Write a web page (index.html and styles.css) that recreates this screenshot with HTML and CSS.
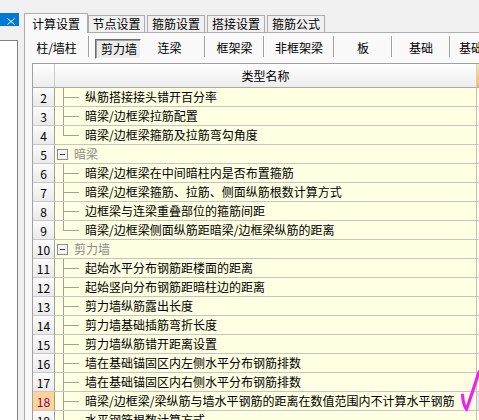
FILE: index.html
```html
<!DOCTYPE html>
<html lang="zh-CN">
<head>
<meta charset="utf-8">
<title>计算设置</title>
<link rel="stylesheet" href="styles.css">
</head>
<body>
<div class="app">
  <aside class="side">
    <div class="side-bar">
      <svg class="close" width="8" height="7" viewBox="0 0 8 7"><path d="M0.5 0.5 L7.5 6.5 M7.5 0.5 L0.5 6.5" stroke="#fff" stroke-width="1" fill="none"/></svg>
    </div>
    <div class="side-box"></div>
  </aside>
  <main class="main">
    <div class="tabs">
      <div class="tab active">计算设置</div>
      <div class="tab first">节点设置</div>
      <div class="tab">箍筋设置</div>
      <div class="tab">搭接设置</div>
      <div class="tab">箍筋公式</div>
    </div>
    <div class="page">
      <div class="subtabs">
        <div class="st w63">柱/墙柱</div>
        <div class="sep"></div>
        <div class="st w56"><div class="pressed">剪力墙</div></div>
        <div class="st w58 shift">连梁</div>
        <div class="sep"></div>
        <div class="st w57">框架梁</div>
        <div class="sep"></div>
        <div class="st w68">非框架梁</div>
        <div class="sep"></div>
        <div class="st w56">板</div>
        <div class="sep"></div>
        <div class="st w56">基础</div>
        <div class="sep"></div>
        <div class="st last">基础</div>
      </div>
      <div class="grid">
        <div class="row hd">
          <div class="c num"></div>
          <div class="c name">类型名称</div>
          <div class="c extra"></div>
        </div>
        <div class="row"><div class="c num">2</div><div class="c txt"><span class="tree"></span>纵筋搭接接头错开百分率</div><div class="c extra"></div></div>
        <div class="row"><div class="c num">3</div><div class="c txt"><span class="tree"></span>暗梁/边框梁拉筋配置</div><div class="c extra"></div></div>
        <div class="row"><div class="c num">4</div><div class="c txt"><span class="tree end"></span>暗梁/边框梁箍筋及拉筋弯勾角度</div><div class="c extra"></div></div>
        <div class="row"><div class="c num">5</div><div class="c txt"><span class="box"></span><span class="grp">暗梁</span></div><div class="c extra"></div></div>
        <div class="row"><div class="c num">6</div><div class="c txt"><span class="tree"></span>暗梁/边框梁在中间暗柱内是否布置箍筋</div><div class="c extra"></div></div>
        <div class="row"><div class="c num">7</div><div class="c txt"><span class="tree"></span>暗梁/边框梁箍筋、拉筋、侧面纵筋根数计算方式</div><div class="c extra"></div></div>
        <div class="row"><div class="c num">8</div><div class="c txt"><span class="tree"></span>边框梁与连梁重叠部位的箍筋间距</div><div class="c extra"></div></div>
        <div class="row"><div class="c num">9</div><div class="c txt"><span class="tree end"></span>暗梁/边框梁侧面纵筋距暗梁/边框梁纵筋的距离</div><div class="c extra"></div></div>
        <div class="row"><div class="c num">10</div><div class="c txt"><span class="box"></span><span class="grp">剪力墙</span></div><div class="c extra"></div></div>
        <div class="row"><div class="c num">11</div><div class="c txt"><span class="tree"></span>起始水平分布钢筋距楼面的距离</div><div class="c extra"></div></div>
        <div class="row"><div class="c num">12</div><div class="c txt"><span class="tree"></span>起始竖向分布钢筋距暗柱边的距离</div><div class="c extra"></div></div>
        <div class="row"><div class="c num">13</div><div class="c txt"><span class="tree"></span>剪力墙纵筋露出长度</div><div class="c extra"></div></div>
        <div class="row"><div class="c num">14</div><div class="c txt"><span class="tree"></span>剪力墙基础插筋弯折长度</div><div class="c extra"></div></div>
        <div class="row"><div class="c num">15</div><div class="c txt"><span class="tree"></span>剪力墙纵筋错开距离设置</div><div class="c extra"></div></div>
        <div class="row"><div class="c num">16</div><div class="c txt"><span class="tree"></span>墙在基础锚固区内左侧水平分布钢筋排数</div><div class="c extra"></div></div>
        <div class="row"><div class="c num">17</div><div class="c txt"><span class="tree"></span>墙在基础锚固区内右侧水平分布钢筋排数</div><div class="c extra"></div></div>
        <div class="row"><div class="c num sel">18</div><div class="c txt"><span class="tree"></span>暗梁/边框梁/梁纵筋与墙水平钢筋的距离在数值范围内不计算水平钢筋</div><div class="c extra cur"></div></div>
        <div class="row"><div class="c num">19</div><div class="c txt"><span class="tree"></span>水平钢筋根数计算方式</div><div class="c extra"></div></div>
        <svg class="check" width="22" height="44" viewBox="0 0 22 44"><path d="M4.5 27 C5 34 6.5 39 8.5 41 C11 35 15 22 21 4" stroke="#ee22ee" stroke-width="3.2" stroke-linecap="round" fill="none"/></svg>
      </div>
    </div>
  </main>
</div>
</body>
</html>
```
FILE: styles.css
```css
* { box-sizing: border-box; }
html, body { margin: 0; padding: 0; }
body {
  width: 479px;
  height: 420px;
  overflow: hidden;
  background: #f0f0f0;
  font-family: "Noto Sans CJK SC", "Noto Sans", sans-serif;
  font-size: 12px;
  color: #000;
}
.app { display: flex; height: 420px; }

/* left docked panel */
.side { width: 19px; flex: none; display: flex; flex-direction: column; }
.side-bar {
  margin-top: 13px;
  height: 13px;
  background: #0078d7;
  display: flex;
  align-items: flex-end;
  justify-content: flex-end;
  padding: 0 4px 1px 0;
}
.close { display: block; }
.side-box {
  margin-top: 14px;
  flex: 1;
  width: 18px;
  background: #fff;
  border-top: 1px solid #828282;
  border-right: 1px solid #828282;
}

/* main tab control */
.main {
  margin-left: 5px;
  flex: 1;
  min-width: 0;
  display: flex;
  flex-direction: column;
  overflow: hidden;
}
.tabs {
  margin-top: 13px;
  height: 19px;
  display: flex;
  align-items: flex-end;
  flex: none;
}
.tab {
  flex: none;
  width: 58px;
  height: 17px;
  margin-left: 2px;
  border: 1px solid #adadad;
  border-bottom: none;
  background: #f0f0f0;
  display: flex;
  align-items: center;
  justify-content: center;
  white-space: nowrap;
  line-height: 1;
}
.tab.first { margin-left: 0; width: 57px; }
.tab.active {
  width: 64px;
  height: 20px;
  margin: 0 0 -1px 0;
  background: #f9f9f9;
  position: relative;
  z-index: 1;
  padding-top: 1px;
}
.page {
  flex: 1;
  min-height: 0;
  background: #f9f9f9;
  border-top: 1px solid #adadad;
  border-left: 1px solid #adadad;
  display: flex;
  flex-direction: column;
}

/* sub tab strip */
.subtabs { height: 30px; display: flex; flex: none; }
.st {
  flex: none;
  display: flex;
  align-items: center;
  justify-content: center;
  white-space: nowrap;
  line-height: 1;
}
.w63 { width: 63px; }
.w56 { width: 56px; }
.w57 { width: 57px; }
.w58 { width: 58px; }
.w68 { width: 68px; }
.shift { padding-right: 11px; }
.st.last { justify-content: flex-start; padding-left: 8px; }
.sep {
  flex: none;
  width: 2px;
  height: 21px;
  margin-top: 3px;
  border-left: 1px solid #a0a0a0;
  border-right: 1px solid #ffffff;
}
.pressed {
  width: 46px;
  height: 20px;
  margin-top: 2px;
  border: 1px solid;
  border-color: #6d6d6d #ffffff #ffffff #6d6d6d;
  box-shadow: inset 1px 1px 0 #a0a0a0;
  background: #ececec;
  display: flex;
  align-items: center;
  justify-content: center;
  padding-left: 2px;
}

/* data grid */
.grid {
  margin-left: 7px;
  flex: 1;
  min-height: 0;
  border-top: 1px solid #a0a0a0;
  border-left: 1px solid #a0a0a0;
  position: relative;
  overflow: hidden;
}
.row {
  display: grid;
  grid-template-columns: 22px 422px 20px;
  height: 19px;
}
.c {
  border-bottom: 1px solid #c4c4c4;
  display: flex;
  align-items: center;
  white-space: nowrap;
  overflow: hidden;
  line-height: 18px;
}
.num {
  justify-content: center;
  border-right: 1px solid #a0a0a0;
  border-bottom-color: #c8c8c8;
  background: linear-gradient(#fbfbfb, #eaeaea);
  padding-top: 1px;
}
.num.sel { background: #fdd495; color: #800080; }
.txt { background: #ffffe1; border-right: 1px solid #c0c0c0; }
.extra { background: #ffffe1; }
.extra.cur { background: #dde8f6; }

.row.hd { height: 24px; }
.hd .c {
  background: linear-gradient(#ffffff, #ececec);
  border-bottom: 1px solid #a8a8a8;
}
.hd .num { border-right: 1px solid #c8c8c8; }
.hd .name { justify-content: center; border-right: 1px solid #d0d0d0; padding-top: 1px; }
.hd .extra { background: linear-gradient(#ffe4b0, #f4b658); }

.tree {
  flex: none;
  width: 30px;
  height: 18px;
  background:
    linear-gradient(#a0a0a0, #a0a0a0) 8px 0 / 1px 18px no-repeat,
    linear-gradient(#a0a0a0, #a0a0a0) 8px 9px / 16px 1px no-repeat;
}
.tree.end {
  background:
    linear-gradient(#a0a0a0, #a0a0a0) 8px 0 / 1px 10px no-repeat,
    linear-gradient(#a0a0a0, #a0a0a0) 8px 9px / 16px 1px no-repeat;
}
.box {
  flex: none;
  width: 11px;
  height: 11px;
  margin-left: 2px;
  border: 1px solid #8c8c8c;
  background: linear-gradient(#404040, #404040) center / 5px 1px no-repeat, #f4f4f4;
}
.grp { margin-left: 6px; color: #8a8a8a; }

.check {
  position: absolute;
  left: 425px;
  top: 304px;
}
```
